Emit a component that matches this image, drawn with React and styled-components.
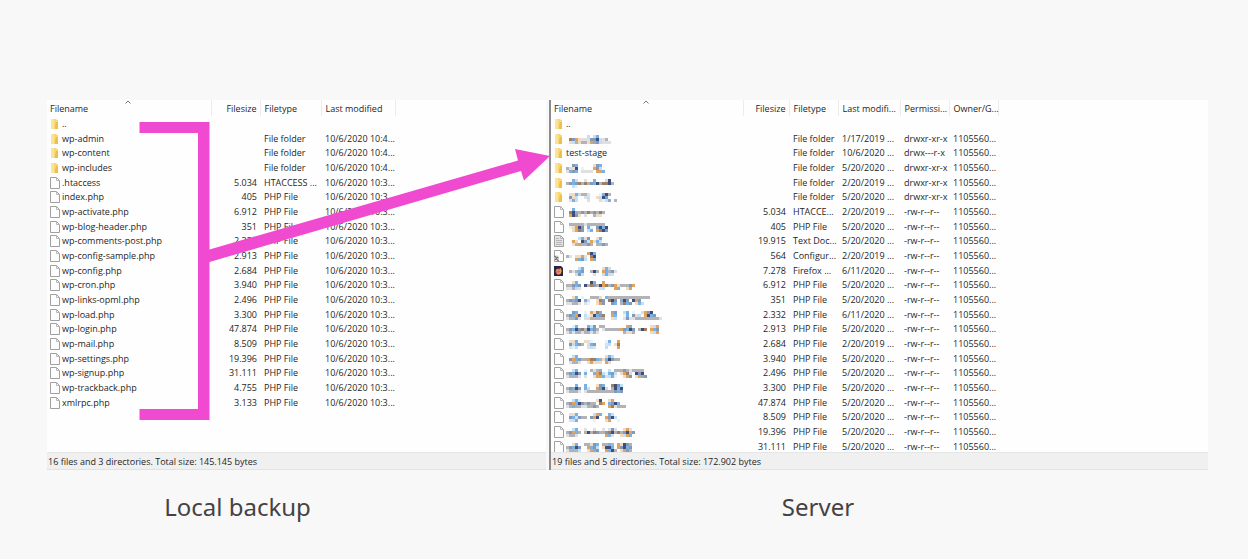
import React from "react";
import styled, { createGlobalStyle } from "styled-components";

const GlobalStyle = createGlobalStyle`
  * {
    box-sizing: border-box;
  }

  body {
    margin: 0;
    background-color: #f8f8f9;
    color: #1f1f1f;
    font-family: "Noto Sans", "Open Sans", sans-serif;
  }
`;

const Page = styled.main`
  padding: 100px 40px 32px 47px;
`;

const Board = styled.div`
  position: relative;
  display: grid;
  grid-template-columns: 499fr 662fr;
  font-family: "Open Sans", "Noto Sans", sans-serif;
`;

const Panel = styled.section`
  display: flex;
  flex-direction: column;
  min-width: 0;
  border-left: ${(props) => (props.divided ? "2px solid #8c8c8f" : "none")};
  margin-left: ${(props) => (props.divided ? "3px" : "0")};
`;

const ListArea = styled.div`
  height: 352px;
  overflow: hidden;
  background-color: #fefefe;
`;

const FileTable = styled.table`
  width: 100%;
  table-layout: fixed;
  border-collapse: collapse;
  font-size: 9px;
  line-height: 14px;
`;

const Col = styled.col`
  width: ${(props) => (props.size ? `${props.size}px` : "auto")};
`;

const HeadCell = styled.th`
  position: relative;
  height: 16px;
  padding: 1px 3px 0 4px;
  border-right: 1px solid #ececec;
  font-weight: 400;
  text-align: ${(props) => (props.right ? "right" : "left")};
  white-space: nowrap;

  &:first-child {
    padding-left: 3px;
  }

  &:last-child {
    border-right: none;
  }
`;

const SortMark = styled.svg`
  position: absolute;
  top: 0;
  left: 48%;
  width: 6px;
  height: 4px;
`;

const Row = styled.tr`
  height: 15px;

  &:nth-child(3n) {
    height: 14px;
  }
`;

const Cell = styled.td`
  padding: 0 3px 0 4px;
  overflow: hidden;
  text-align: ${(props) => (props.right ? "right" : "left")};
  white-space: nowrap;

  &:first-child {
    padding-left: 3px;
  }
`;

const NameCell = styled.div`
  display: flex;
  align-items: center;
  gap: 2px;
  height: 14px;

  svg {
    flex: none;
  }
`;

const StatusBar = styled.footer`
  height: 18px;
  padding: 0 1px;
  border-top: 1px solid #e6e6e6;
  border-bottom: 1px solid #e2e2e2;
  background-color: #f0f0f1;
  font-size: 9px;
  line-height: 18px;
`;

const Overlay = styled.svg`
  position: absolute;
  inset: 0;
  width: 100%;
  height: 100%;
  pointer-events: none;
`;

const Captions = styled.div`
  display: grid;
  grid-template-columns: 499fr 662fr;
  margin-top: 20px;
`;

const Caption = styled.h2`
  margin: 0;
  padding-right: 118px;
  color: #434345;
  font-size: 24px;
  font-weight: 400;
  line-height: 34px;
  text-align: center;
`;

const FolderIcon = () => (
  <svg width="10" height="12" viewBox="0 0 10 12">
    <path d="M1 1h5l1 1h1v9H1z" fill="#f8d775" />
    <path d="M1 1h3v10H1z" fill="#fbe39a" />
    <path d="M6 4h2v7H5V8z" fill="#edbf4c" />
  </svg>
);

const FileIcon = ({ kind }) => (
  <svg width="10" height="12" viewBox="0 0 10 12">
    <path
      d="M.5.5h6l3 3v8h-9z"
      fill={kind === "text" ? "#e4e4e4" : "#fdfdfd"}
      stroke="#a0a0a0"
    />
    <path d="M6.500.5v3h3" fill="none" stroke="#b8b8b8" />
    {kind === "text" && (
      <path d="M2 3.500h3M2 5.500h6M2 7.500h6M2 9.500h6" stroke="#b5b5b5" />
    )}
    {kind === "config" && (
      <g>
        <circle cx="2.500" cy="8" r="2.500" fill="#c4c4c4" />
        <path d="M0 6l2 1 1 3 2 1M1 10l3-3" fill="none" stroke="#666" />
      </g>
    )}
  </svg>
);

const FirefoxIcon = () => (
  <svg width="10" height="12" viewBox="0 0 10 12">
    <path d="M0 1h7l2 2v8H0z" fill="#24264b" />
    <circle cx="4.500" cy="6.500" r="3" fill="#e8562e" />
    <path d="M2 5l2-1 1 1 2-2 .5 3-1 3-3 .5z" fill="#f6a23b" />
    <circle cx="4.500" cy="6.500" r="1.300" fill="#c9619b" />
  </svg>
);

const icons = {
  folder: <FolderIcon />,
  file: <FileIcon />,
  text: <FileIcon kind="text" />,
  config: <FileIcon kind="config" />,
  firefox: <FirefoxIcon />,
};

const shades = {
  g: "#e0e0e3",
  G: "#b3b2b6",
  s: "#8399b9",
  k: "#3d4e7b",
  b: "#7ab0e2",
  l: "#bfe0f6",
  c: "#e4f4fc",
  o: "#e0a35e",
  t: "#f1dbc0",
  n: "#9e7f63",
};

// Hidden names: three lines of 3px blocks, one letter per block
const Mosaic = ({ pattern }) => {
  const lines = pattern.split("|");
  const width = Math.max(...lines.map((line) => line.length)) * 3;
  return (
    <svg width={width} height="10" viewBox={`0 0 ${width} 10`}>
      {lines.map((line, y) =>
        [...line].map((shade, x) =>
          shades[shade] ? (
            <rect
              key={`${x}-${y}`}
              x={x * 3}
              y={y * 3 + 1}
              width="3"
              height="3"
              fill={shades[shade]}
            />
          ) : null
        )
      )}
    </svg>
  );
};

const localFiles = [
  ["folder", "..", "", "", ""],
  ["folder", "wp-admin", "", "File folder", "10/6/2020 10:4..."],
  ["folder", "wp-content", "", "File folder", "10/6/2020 10:4..."],
  ["folder", "wp-includes", "", "File folder", "10/6/2020 10:4..."],
  ["file", ".htaccess", "5.034", "HTACCESS ...", "10/6/2020 10:3..."],
  ["file", "index.php", "405", "PHP File", "10/6/2020 10:3..."],
  ["file", "wp-activate.php", "6.912", "PHP File", "10/6/2020 10:3..."],
  ["file", "wp-blog-header.php", "351", "PHP File", "10/6/2020 10:3..."],
  ["file", "wp-comments-post.php", "2.332", "PHP File", "10/6/2020 10:3..."],
  ["file", "wp-config-sample.php", "2.913", "PHP File", "10/6/2020 10:3..."],
  ["file", "wp-config.php", "2.684", "PHP File", "10/6/2020 10:3..."],
  ["file", "wp-cron.php", "3.940", "PHP File", "10/6/2020 10:3..."],
  ["file", "wp-links-opml.php", "2.496", "PHP File", "10/6/2020 10:3..."],
  ["file", "wp-load.php", "3.300", "PHP File", "10/6/2020 10:3..."],
  ["file", "wp-login.php", "47.874", "PHP File", "10/6/2020 10:3..."],
  ["file", "wp-mail.php", "8.509", "PHP File", "10/6/2020 10:3..."],
  ["file", "wp-settings.php", "19.396", "PHP File", "10/6/2020 10:3..."],
  ["file", "wp-signup.php", "31.111", "PHP File", "10/6/2020 10:3..."],
  ["file", "wp-trackback.php", "4.755", "PHP File", "10/6/2020 10:3..."],
  ["file", "xmlrpc.php", "3.133", "PHP File", "10/6/2020 10:3..."],
];

const dir = "drwxr-xr-x";
const rw = "-rw-r--r--";
const owner = "1105560...";

const serverFiles = [
  ["folder", "..", "", "", "", "", ""],
  ["folder", ".......l.lb...|.nsotgggssklgG|.tlGtGGgobslggg", "", "File folder", "1/17/2019 ...", dir, owner],
  ["folder", "test-stage", "", "File folder", "10/6/2020 ...", "drwx---r-x", owner],
  ["folder", "..sb.....tsb|Gltk.c...osl|gbsb.gggg.oob", "", "File folder", "5/20/2020 ...", dir, owner],
  ["folder", "..bl..g..b...lk|GsbsnGnGsbkGnnkG|..lc............", "", "File folder", "2/20/2019 ...", dir, owner],
  ["folder", ".gtblGGg...cbkG|.stl..gl..tlks|.gbl...g...tclb.G", "", "File folder", "5/20/2020 ...", dir, owner],
  ["file", "..b|.nkbGsGnGsGnG|.okst.g..Gtg", "5.034", "HTACCE...", "2/20/2019 ...", rw, owner],
  ["file", ".GGGGGgGGGGGG|.ctoks.bc.skbk|..tons.lb.onks", "405", "PHP File", "5/20/2020 ...", rw, owner],
  ["text", "....lbts..tb|..ot.kslotbl|..gGoGGsG.GGsG", "19.915", "Text Doc...", "5/20/2020 ...", rw, owner],
  ["config", ".......okb|Gg.ttog.nk|...obsl.ob", "564", "Configur...", "2/20/2019 ...", rw, owner],
  ["firefox", "....lb......tbl|.GgGbs..GkG.obGsg|...lsl...g..lblg", "7.278", "Firefox ...", "6/11/2020 ...", rw, owner],
  ["file", "..tb....kb..o|GGsbs.kGnsGkonGsotGGGso|ggGlg......gl...ob..to", "6.912", "PHP File", "5/20/2020 ...", rw, owner],
  ["file", "..tb.c..GGGt.bGGGGGGGGGGGGGG|Gsbsk.bl..tns.nks.bks.kos|ggGGg.gc..tos..sb.Gnbs.tbl", "351", "PHP File", "5/20/2020 ...", rw, owner],
  ["file", "..sb..c.otnb...bs..lb.c..tosk|Gsbok.lctkbsn..ob..cb.stl.okbs|gGGsg.gtGGGGG..tl..gsggGGGGGGGGg", "2.332", "PHP File", "6/11/2020 ...", rw, owner],
  ["file", "..cb...bls.GG.......ob......tlo|GsbksnGkbsG.gGGGGGosbks.Gkn.obs|gGgGGgGGgGg........GttG.....tlo", "2.913", "PHP File", "5/20/2020 ...", rw, owner],
  ["file", ".gtb..tgc....cb..o|.slbsG.tbs...gl.tn|.gcl...glg...l...o", "2.684", "PHP File", "2/20/2019 ...", rw, owner],
  ["file", "..lb.........tbl|.sobsGGonnbGtbksGG|.gGGg..tottg.ot", "3.940", "PHP File", "5/20/2020 ...", rw, owner],
  ["file", "..lb..c.GgGb..l.GGGsGgGGGG|Gsbks.b..bonlcbsl.tonl.ksk|gGGGg.g..toobglbc..tos.tobs", "2.496", "PHP File", "5/20/2020 ...", rw, owner],
  ["file", "...b..b...tsb..nksl|Gsbks.bl..oskl.Gkbk|gGGGg.gGGGGGGGGGsbs", "3.300", "PHP File", "5/20/2020 ...", rw, owner],
  ["file", "..lbc.....tk..to|GsobksGsGG.no.bskb|gGbGGggGGsG...ontGGG", "47.874", "PHP File", "5/20/2020 ...", rw, owner],
  ["file", ".gtb.....lob..bl|.sblsGG.sok..oskl|.glb.....c...to..c", "8.509", "PHP File", "5/20/2020 ...", rw, owner],
  ["file", "..lb..g..g..g.gsg..tog|GsobG.GkGnsGGsnkGnGskos|gGGg.........obg..tlob", "19.396", "PHP File", "5/20/2020 ...", rw, owner],
  ["file", "..tb..GGtsb.GGbG.otksG|Gsbks..obsl.tkkb.oskbs|gGGGl..tobs..obkG.tosG", "31.111", "PHP File", "5/20/2020 ...", rw, owner],
];

const localColumns = [
  ["Filename", 164],
  ["Filesize", 49],
  ["Filetype", 61],
  ["Last modified", 74],
];

const serverColumns = [
  ["Filename", 192],
  ["Filesize", 46],
  ["Filetype", 49],
  ["Last modifi...", 62],
  ["Permissi...", 49],
  ["Owner/G...", 49],
];

const isHiddenName = (name) => name.includes("|");

const FileList = ({ label, columns, files, status, divided }) => (
  <Panel divided={divided} aria-label={label}>
    <ListArea>
      <FileTable>
        <colgroup>
          {columns.map(([title, size]) => (
            <Col key={title} size={size} />
          ))}
          <Col />
        </colgroup>
        <thead>
          <tr>
            {columns.map(([title], i) => (
              <HeadCell key={title} right={i === 1}>
                {title}
                {i === 0 && (
                  <SortMark viewBox="0 0 6 4">
                    <path d="M.5 3.500L3 1l2.500 2.500" fill="none" stroke="#777" />
                  </SortMark>
                )}
              </HeadCell>
            ))}
            <HeadCell />
          </tr>
        </thead>
        <tbody>
          {files.map(([icon, name, ...rest], row) => (
            <Row key={row}>
              <Cell>
                <NameCell>
                  {icons[icon]}
                  {isHiddenName(name) ? <Mosaic pattern={name} /> : name}
                </NameCell>
              </Cell>
              {rest.map((value, i) => (
                <Cell key={i} right={i === 0}>
                  {value}
                </Cell>
              ))}
              <Cell />
            </Row>
          ))}
        </tbody>
      </FileTable>
    </ListArea>
    <StatusBar>{status}</StatusBar>
  </Panel>
);

const App = () => {
  return (
    <>
      <GlobalStyle />
      <Page>
        <Board>
          <FileList
            label="Local backup"
            columns={localColumns}
            files={localFiles}
            status="16 files and 3 directories. Total size: 145.145 bytes"
          />
          <FileList
            divided
            label="Server"
            columns={serverColumns}
            files={serverFiles}
            status="19 files and 5 directories. Total size: 172.902 bytes"
          />
          <Overlay viewBox="0 0 1161 370" preserveAspectRatio="none">
            <path
              d="M92.500 22H162.500V149.500L471 60.500L468 49L503 56L477 80.500L474 71L162.500 162V320H92.500V309H151V33H92.500z"
              fill="#f04bd0"
            />
          </Overlay>
        </Board>
        <Captions>
          <Caption>Local backup</Caption>
          <Caption>Server</Caption>
        </Captions>
      </Page>
    </>
  );
};

export default App;
